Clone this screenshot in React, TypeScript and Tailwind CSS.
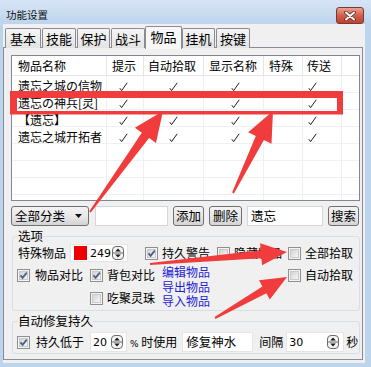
import React from "react";

type Pt = [number, number];

function arrowPts(tail: Pt, tip: Pt, tw: number, sw: number, hl: number, hw: number) {
  const dx = tip[0] - tail[0];
  const dy = tip[1] - tail[1];
  const len = Math.hypot(dx, dy);
  const ux = dx / len;
  const uy = dy / len;
  const nx = -uy;
  const ny = ux;
  const bx = tip[0] - ux * hl;
  const by = tip[1] - uy * hl;
  const p = (x: number, y: number) => `${x.toFixed(1)},${y.toFixed(1)}`;
  return [
    p(tail[0] + (nx * tw) / 2, tail[1] + (ny * tw) / 2),
    p(bx + (nx * sw) / 2, by + (ny * sw) / 2),
    p(bx + (nx * hw) / 2, by + (ny * hw) / 2),
    p(tip[0], tip[1]),
    p(bx - (nx * hw) / 2, by - (ny * hw) / 2),
    p(bx - (nx * sw) / 2, by - (ny * sw) / 2),
    p(tail[0] - (nx * tw) / 2, tail[1] - (ny * tw) / 2),
  ].join(" ");
}

function CheckBox({ checked }: { checked?: boolean }) {
  return (
    <span className="relative flex h-[13px] w-[13px] shrink-0 items-center justify-center border border-[#8e8f8f] bg-[#f4f4f4]">
      <span className="h-[9px] w-[9px] border border-[#c9c9c9] bg-gradient-to-br from-[#d2d2d2] to-[#f7f7f7]" />
      {checked && (
        <svg className="absolute left-[1px] top-[1px]" width="9" height="9" viewBox="0 0 9 9">
          <path d="M1.5 4.3 L3.6 6.8 L7.8 1.6" fill="none" stroke="#4a5e8c" strokeWidth="1.8" />
        </svg>
      )}
    </span>
  );
}

function Spin() {
  return (
    <svg width="12" height="14" viewBox="0 0 12 14" className="shrink-0">
      <rect x="0.5" y="0.5" width="11" height="13" rx="3.5" fill="#f3f3f3" stroke="#6a6a6a" />
      <line x1="1" y1="7" x2="11" y2="7" stroke="#6a6a6a" />
      <path d="M3.2 5.4 L6 2.6 L8.8 5.4Z" fill="#1a1a1a" />
      <path d="M3.2 8.6 L6 11.4 L8.8 8.6Z" fill="#1a1a1a" />
    </svg>
  );
}

function Tick() {
  return (
    <svg width="9" height="10" viewBox="0 0 9 10" className="inline-block">
      <path d="M0.8 6.2 L2.6 8.6 L8.2 0.8" fill="none" stroke="#1e1e1e" strokeWidth="1" />
    </svg>
  );
}

function Btn({ label, w }: { label: string; w: string }) {
  return (
    <div
      className={`${w} flex h-[20px] items-center justify-center rounded-[3px] border border-[#707070] bg-gradient-to-b from-[#f3f3f3] via-[#e9e9e9] to-[#d3d3d3] text-[12.5px] leading-none`}
    >
      {label}
    </div>
  );
}

const cols = [
  { w: "w-[95px]", pl: "pl-[6px]", cpl: "" },
  { w: "w-[37px]", pl: "pl-[5px]", cpl: "pl-[12px]" },
  { w: "w-[60px]", pl: "pl-[4px]", cpl: "pl-[25px]" },
  { w: "w-[60px]", pl: "pl-[5px]", cpl: "pl-[27px]" },
  { w: "w-[39px]", pl: "pl-[5px]", cpl: "pl-[10px]" },
  { w: "w-[39px]", pl: "pl-[4px]", cpl: "pl-[5px]" },
];

const headers = ["物品名称", "提示", "自动拾取", "显示名称", "特殊", "传送"];

const rows: (string | boolean)[][] = [
  ["遗忘之城の信物", true, true, true, false, true],
  ["遗忘の神兵[灵]", true, false, true, false, true],
  ["【遗忘】", true, true, true, false, true],
  ["遗忘之城开拓者", true, true, true, false, true],
  ["", false, false, false, false, false],
  ["", false, false, false, false, false],
  ["", false, false, false, false, false],
  ["", false, false, false, false, false],
];

const tabs = [
  { t: "基本", w: "w-[36px]", ml: "ml-[1px]" },
  { t: "技能", w: "w-[34px]", ml: "ml-[1px]" },
  { t: "保护", w: "w-[33px]", ml: "ml-[1px]" },
  { t: "战斗", w: "w-[34px]", ml: "ml-[1px]" },
  { t: "物品", w: "w-[37px]", ml: "ml-0", sel: true },
  { t: "挂机", w: "w-[33px]", ml: "ml-0" },
  { t: "按键", w: "w-[34px]", ml: "ml-[1px]" },
];

export default function App() {
  const red = "#f03c3c";
  return (
    <div className="relative h-[367px] w-[371px] overflow-hidden bg-[#bdd4ed] font-['Noto_Sans_CJK_SC',sans-serif] text-[12px] text-black">
      {/* title bar */}
      <div className="flex h-[24px] items-start justify-between bg-gradient-to-b from-[#d6e5f5] to-[#bdd4ed] pl-[6px] pr-[7px]">
        <span className="mt-[7px] text-[10.5px] leading-[16px] text-[#111]">功能设置</span>
        <div className="mt-[7px] flex h-[17px] w-[28px] items-center justify-center rounded-[3px] border border-[#7a3a34] bg-gradient-to-b from-[#e8a293] via-[#d0604c] to-[#c0402b]">
          <svg width="12" height="10" viewBox="0 0 12 10">
            <path d="M2 1.5 L10 8.5 M10 1.5 L2 8.5" stroke="#5a2a25" strokeWidth="3.6" strokeLinecap="round" />
            <path d="M2 1.5 L10 8.5 M10 1.5 L2 8.5" stroke="#ffffff" strokeWidth="2" strokeLinecap="round" />
          </svg>
        </div>
      </div>

      {/* body */}
      <div className="ml-[3px] h-[339px] w-[362px] bg-[#f0f0f0]">
        {/* tabs */}
        <div className="flex h-[24px] items-end pl-[1px]">
          {tabs.map((tab) => (
            <div
              key={tab.t}
              className={`${tab.w} ${tab.ml} flex items-center justify-center rounded-t-[2px] border border-b-0 border-[#898c95] text-[13px] ${
                tab.sel
                  ? "relative z-10 -mb-[1px] h-[23px] bg-[#f7f7f7] pb-[2px]"
                  : "h-[20px] bg-gradient-to-b from-[#f5f5f5] to-[#e3e3e3]"
              }`}
            >
              {tab.t}
            </div>
          ))}
        </div>

        {/* panel */}
        <div className="-mt-[1px] h-[313px] w-[360px] border border-[#898c95] bg-[#f0f0f0] pl-[7px] pt-[7px]">
          {/* list */}
          <div className="h-[146px] w-[349px] overflow-hidden border border-[#828790] bg-white">
            <div className="flex h-[20px] border-b border-[#e5e5e5]">
              {cols.map((c, i) => (
                <div key={i} className={`${c.w} ${c.pl} shrink-0 border-r border-[#e5e5e5] leading-[19px]`}>
                  {headers[i]}
                </div>
              ))}
              <div className="flex-1" />
            </div>
            {rows.map((r, ri) => (
              <div key={ri} className="flex h-[17px] border-b border-[#f0f0f0]">
                {cols.map((c, i) => (
                  <div
                    key={i}
                    className={`${c.w} ${i === 0 ? c.pl : c.cpl} flex shrink-0 items-end whitespace-nowrap border-r border-[#f0f0f0] leading-[12px]`}
                  >
                    {i === 0 ? (r[0] as string) : r[i] ? <Tick /> : null}
                  </div>
                ))}
                <div className="flex-1" />
              </div>
            ))}
          </div>

          {/* controls */}
          <div className="mt-[5px] flex h-[20px] w-[349px] items-center">
            <div className="flex h-[20px] w-[78px] items-center rounded-[3px] border border-[#707070] bg-gradient-to-b from-[#f3f3f3] via-[#e9e9e9] to-[#d3d3d3] pl-[3px] pr-[6px]">
              <span className="flex-1 text-[12.5px] leading-none">全部分类</span>
              <svg width="7" height="4" viewBox="0 0 7 4">
                <path d="M0 0 L7 0 L3.5 4Z" fill="#111" />
              </svg>
            </div>
            <div className="ml-[6px] h-[20px] w-[73px] border border-[#d3d6da] bg-white" />
            <div className="ml-[5px]">
              <Btn label="添加" w="w-[31px]" />
            </div>
            <div className="ml-[5px]">
              <Btn label="删除" w="w-[33px]" />
            </div>
            <div className="ml-[5px] flex h-[20px] w-[76px] items-center border border-[#d3d6da] bg-white pl-[3px] text-[12.5px]">
              遗忘
            </div>
            <div className="ml-[5px]">
              <Btn label="搜索" w="w-[31px]" />
            </div>
          </div>

          {/* group 1 */}
          <fieldset className="ml-[1px] mt-[3px] w-[348px] rounded-[3px] border border-[#d5dfe5] pb-[1px]">
            <legend className="ml-[5px] text-[12.5px] leading-[14px]">选项</legend>
            <div className="flex h-[20px] items-center">
              <span className="ml-[5px] w-[52px] whitespace-nowrap">特殊物品</span>
              <div className="flex h-[18px] w-[58px] items-center border border-[#e3e5e8] bg-white">
                <span className="ml-[3px] h-[14px] w-[13px] bg-[#ee0000]" />
                <span className="ml-[3px] font-['DejaVu_Sans',sans-serif] text-[11px] leading-none">249</span>
                <span className="ml-auto mr-[3px]">
                  <Spin />
                </span>
              </div>
              <div className="ml-[17px] flex w-[72px] items-center">
                <CheckBox checked />
                <span className="ml-[4px] whitespace-nowrap">持久警告</span>
              </div>
              <div className="flex w-[71px] items-center">
                <CheckBox />
                <span className="ml-[4px] whitespace-nowrap">隐藏物品</span>
              </div>
              <div className="flex items-center">
                <CheckBox />
                <span className="ml-[4px] whitespace-nowrap">全部拾取</span>
              </div>
            </div>
            <div className="flex h-[46px] items-start">
              <div className="ml-[4px] flex h-[24px] w-[73px] items-center">
                <CheckBox checked />
                <span className="ml-[5px] whitespace-nowrap">物品对比</span>
              </div>
              <div className="flex w-[72px] flex-col">
                <div className="flex h-[24px] items-center">
                  <CheckBox checked />
                  <span className="ml-[4px] whitespace-nowrap">背包对比</span>
                </div>
                <div className="flex h-[22px] items-center">
                  <CheckBox />
                  <span className="ml-[4px] whitespace-nowrap">吃聚灵珠</span>
                </div>
              </div>
              <div className="flex w-[126px] flex-col pt-[2px] text-[12px] leading-[14.5px] text-[#1f22d6]">
                <span className="h-[14.5px]">编辑物品</span>
                <span className="h-[14.5px]">导出物品</span>
                <span className="h-[14.5px]">导入物品</span>
              </div>
              <div className="flex h-[24px] items-center">
                <CheckBox />
                <span className="ml-[4px] whitespace-nowrap">自动拾取</span>
              </div>
            </div>
          </fieldset>

          {/* group 2 */}
          <fieldset className="ml-[1px] mt-[3px] w-[348px] rounded-[3px] border border-[#d5dfe5] pb-[1px] pt-[4px]">
            <legend className="ml-[5px] text-[12.5px] leading-[14px]">自动修复持久</legend>
            <div className="flex h-[20px] items-center">
              <span className="ml-[4px]">
                <CheckBox checked />
              </span>
              <span className="ml-[6px] whitespace-nowrap">持久低于</span>
              <div className="ml-[6px] flex h-[20px] w-[37px] items-center border border-[#e3e5e8] bg-white">
                <span className="ml-[2px] font-['DejaVu_Sans',sans-serif] text-[11px] leading-none">20</span>
                <span className="ml-auto mr-[3px]">
                  <Spin />
                </span>
              </div>
              <span className="ml-[3px] whitespace-nowrap">
                <span className="font-['DejaVu_Sans',sans-serif] text-[9px]">%</span> 时使用
              </span>
              <div className="ml-[5px] flex h-[20px] w-[71px] items-center border border-[#e3e5e8] bg-white pl-[3px] text-[12.5px]">
                修复神水
              </div>
              <span className="ml-[6px] whitespace-nowrap">间隔</span>
              <div className="ml-[3px] flex h-[20px] w-[58px] items-center border border-[#e3e5e8] bg-white">
                <span className="ml-[2px] font-['DejaVu_Sans',sans-serif] text-[11px] leading-none">30</span>
                <span className="ml-auto mr-[4px]">
                  <Spin />
                </span>
              </div>
              <span className="ml-[2px]">秒</span>
            </div>
          </fieldset>
        </div>
      </div>

      {/* annotations overlay */}
      <svg className="pointer-events-none absolute left-0 top-0" width="371" height="367" viewBox="0 0 371 367">
        <path fillRule="evenodd" fill={red} d="M10 91 H343 V114.5 H10 Z M17 98 V111 H337 V98 Z" />
        <polygon fill={red} points={arrowPts([90, 212], [163, 111], 2, 9, 30, 26)} />
        <polygon fill={red} points={arrowPts([233, 193], [273, 111], 2, 9, 30, 26)} />
        <polygon fill={red} points={arrowPts([150, 264], [287, 252], 2, 8, 26, 22)} />
        <polygon fill={red} points={arrowPts([215, 318], [287, 277], 2, 8, 26, 22)} />
      </svg>
    </div>
  );
}
